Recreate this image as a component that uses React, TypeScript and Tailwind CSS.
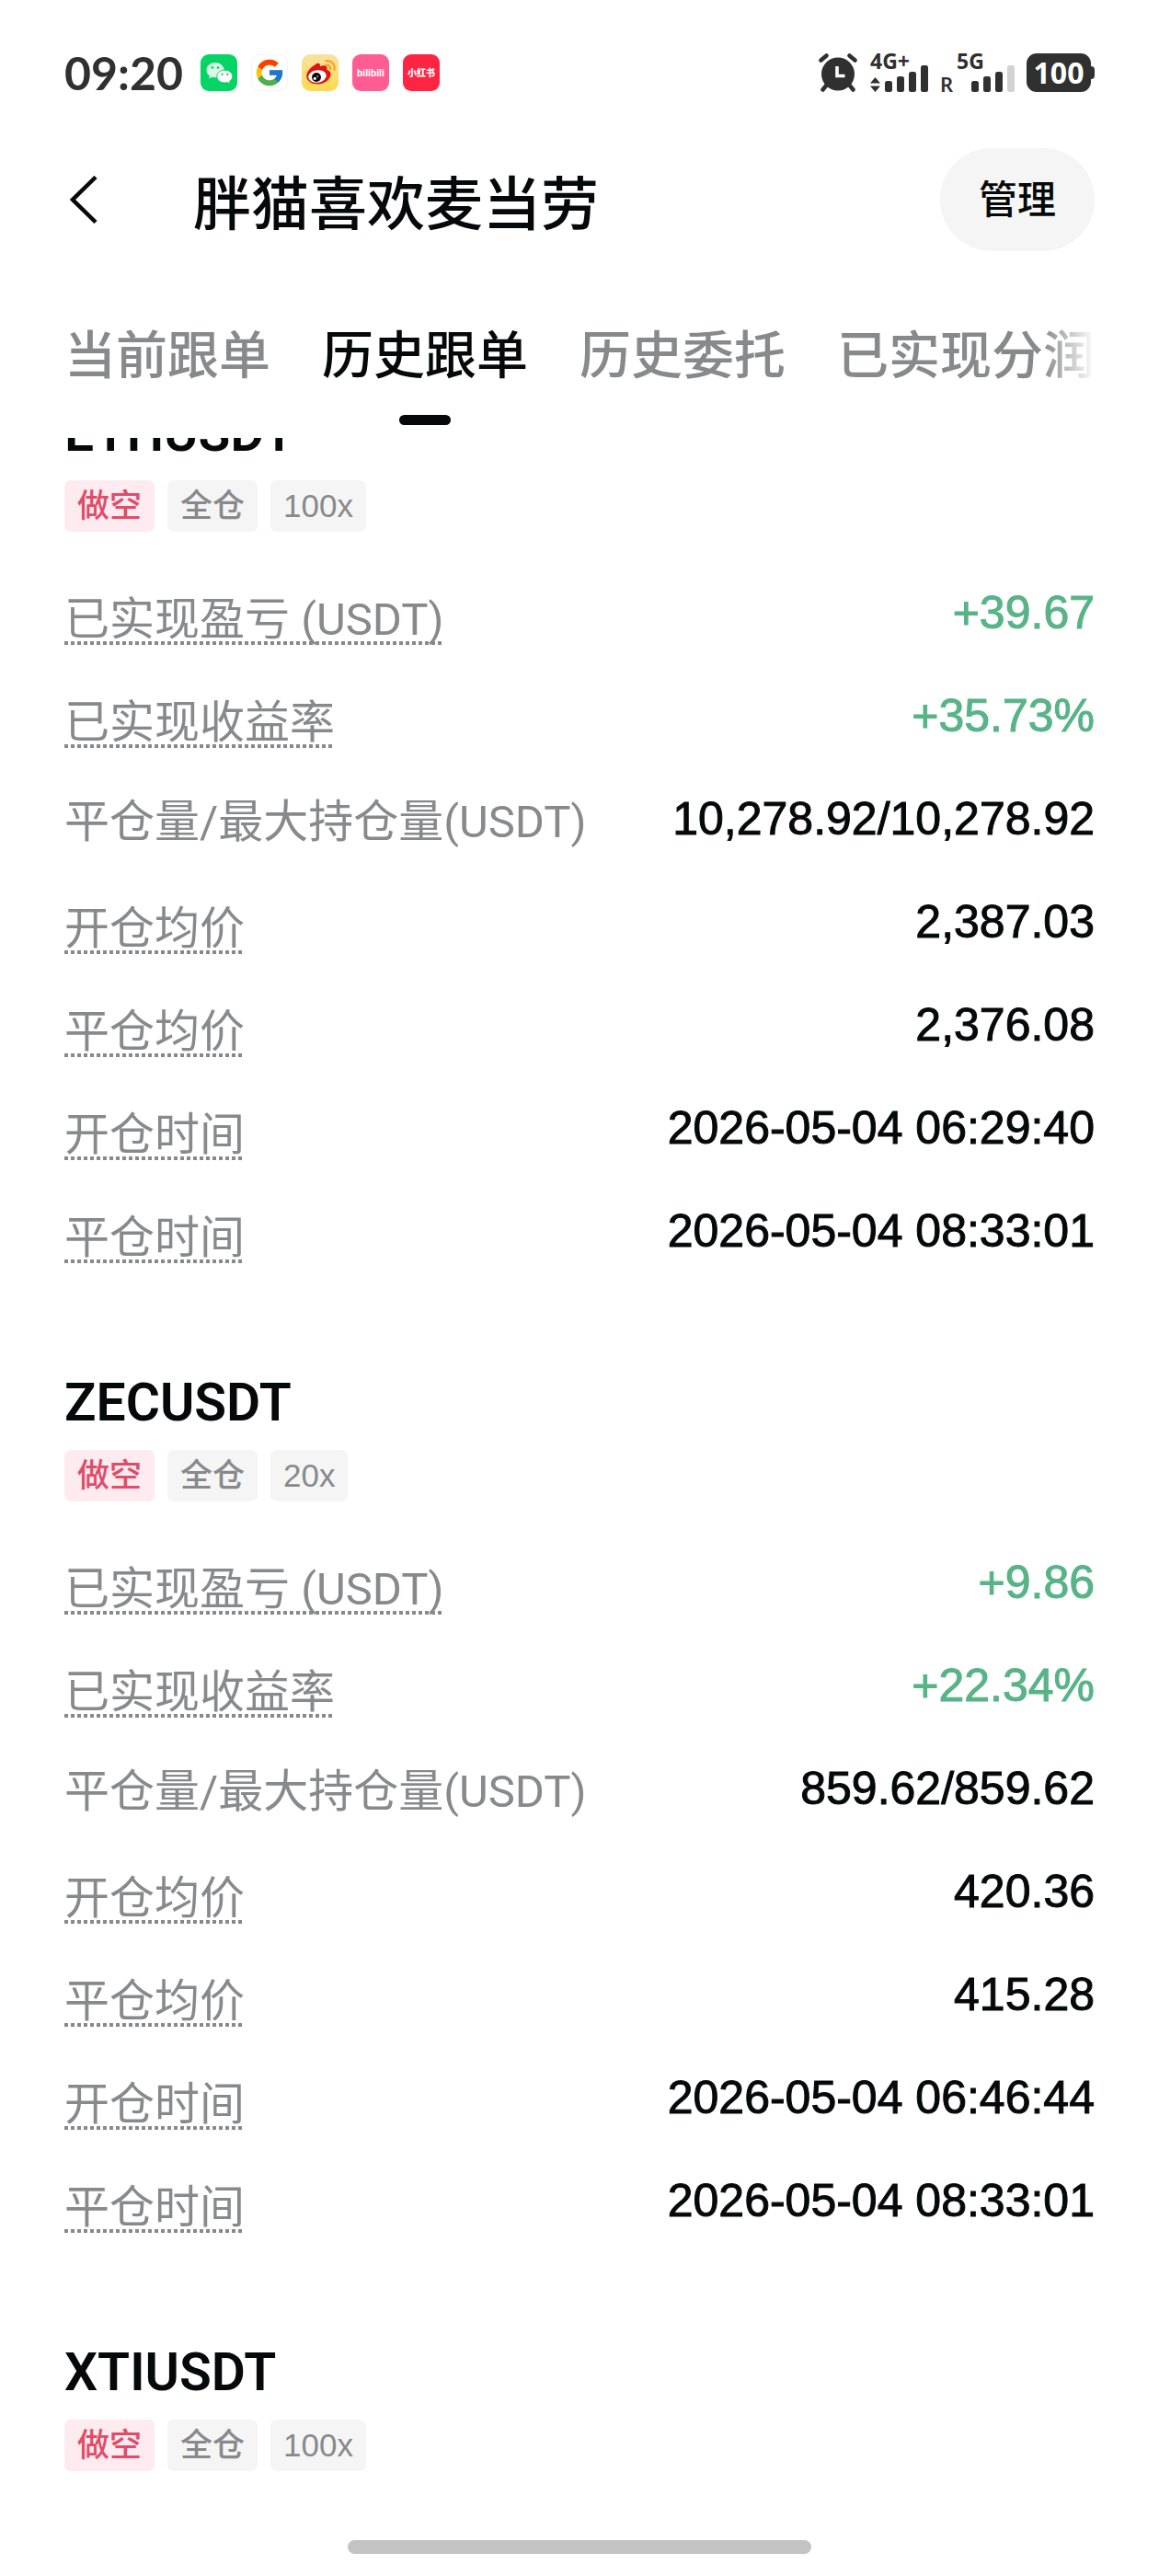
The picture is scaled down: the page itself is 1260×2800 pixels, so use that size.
import React from 'react';
import { FcGoogle } from 'react-icons/fc';

type Row = { label: string; value: string; hint?: boolean; gain?: boolean };
type Position = { symbol: string; leverage: string; rows: Row[] };

const buildRows = (
  pnl: string,
  rate: string,
  size: string,
  open: string,
  close: string,
  openedAt: string,
  closedAt: string
): Row[] => [
  { label: '已实现盈亏 (USDT)', value: pnl, hint: true, gain: true },
  { label: '已实现收益率', value: rate, hint: true, gain: true },
  { label: '平仓量/最大持仓量(USDT)', value: size },
  { label: '开仓均价', value: open, hint: true },
  { label: '平仓均价', value: close, hint: true },
  { label: '开仓时间', value: openedAt, hint: true },
  { label: '平仓时间', value: closedAt, hint: true },
];

const positions: Position[] = [
  {
    symbol: 'ETHUSDT',
    leverage: '100x',
    rows: buildRows('+39.67', '+35.73%', '10,278.92/10,278.92', '2,387.03', '2,376.08', '2026-05-04 06:29:40', '2026-05-04 08:33:01'),
  },
  {
    symbol: 'ZECUSDT',
    leverage: '20x',
    rows: buildRows('+9.86', '+22.34%', '859.62/859.62', '420.36', '415.28', '2026-05-04 06:46:44', '2026-05-04 08:33:01'),
  },
  { symbol: 'XTIUSDT', leverage: '100x', rows: [] },
];

const tabs = ['当前跟单', '历史跟单', '历史委托', '已实现分润'];

const WeChatIcon = () => (
  <svg viewBox="0 0 40 40" className="size-10">
    <rect width="40" height="40" rx="9" fill="#06d566" />
    <path d="M16 9C10.500 9 6.500 12.700 6.500 17.200c0 2.600 1.400 4.900 3.500 6.400l-.9 3 3.500-1.800c1.100.3 2.200.5 3.400.5 5.500 0 9.500-3.600 9.500-8.100S21.500 9 16 9z" fill="#d9fbe6" />
    <path d="M26.500 17.200c-5 0-8.700 3-8.700 6.900s3.700 6.900 8.700 6.900c1 0 2-.1 2.900-.4l3 1.600-.8-2.700c2-1.300 3.200-3.200 3.200-5.400 0-3.900-3.500-6.900-8.300-6.900z" fill="#fff" stroke="#06d566" strokeWidth="1" />
    <g fill="#06c05c">
      <circle cx="13" cy="14.500" r="1.300" />
      <circle cx="19" cy="14.500" r="1.300" />
      <circle cx="23.600" cy="21.800" r="1.100" />
      <circle cx="29.200" cy="21.800" r="1.100" />
    </g>
  </svg>
);

const WeiboIcon = () => (
  <svg viewBox="0 0 40 40" className="size-10">
    <defs>
      <linearGradient id="weibo" x1="0" y1="0" x2="0" y2="1">
        <stop offset="0" stopColor="#f8e3a0" />
        <stop offset="1" stopColor="#ffd94f" />
      </linearGradient>
    </defs>
    <rect width="40" height="40" rx="9" fill="url(#weibo)" />
    <path d="M14.500 11.500c2-2 4.600-2.200 5.300-.6.300.7.200 1.500 0 2.300 2.600-1.200 6.200-1.700 7.400.2.600 1 .5 2.300.1 3.400 2.400.7 4.300 2.200 4.300 4.800 0 5-6 11-14.200 11-6.600 0-12.200-3.400-12.200-9 0-4.300 4.500-9.600 9.300-12.100z" fill="#e01414" />
    <ellipse cx="17" cy="24" rx="9.800" ry="6.700" fill="#fff" transform="rotate(-8 17 24)" />
    <circle cx="16" cy="25" r="5" fill="#0b0b0b" />
    <circle cx="14.300" cy="26.300" r="1.600" fill="#fff" />
    <circle cx="17.300" cy="24" r=".8" fill="#fff" />
    <path d="M26.500 7.300c5-1 10 3 9 9.500M26.500 11.700c2.700-.4 5 1.500 4.600 4.600" fill="none" stroke="#f5a335" strokeWidth="2.400" strokeLinecap="round" />
  </svg>
);

const AlarmIcon = () => (
  <svg viewBox="0 0 42 42" className="size-[42px]">
    <circle cx="21" cy="22.500" r="18" fill="#303030" />
    <g stroke="#303030" strokeWidth="4.500" strokeLinecap="round">
      <path d="M2.500 7.500L8.500 2.500M39.500 7.500L33.500 2.500" />
      <path d="M9 34L4.500 39.500M33 34L37.500 39.500" />
    </g>
    <path d="M20 14v10.500h8.500" fill="none" stroke="#fff" strokeWidth="3.600" />
  </svg>
);

const bars = [
  { x: 0, h: 12 },
  { x: 13, h: 17 },
  { x: 26, h: 22 },
  { x: 39, h: 29 },
];

const Signal: React.FC<{ label: string; weak?: boolean; arrows?: boolean }> = ({ label, weak, arrows }) => (
  <svg viewBox="0 0 64 42" className="h-[42px] w-16 overflow-visible">
    <text x="0" y="17" fontSize="23" fontWeight="700" fill="#303030" className="font-['Noto_Sans',sans-serif]">
      {label}
    </text>
    {arrows && <path d="M5.500 26l5.500 6.500H0zM5.500 42L0 35.500h11z" fill="#303030" />}
    {bars.map((bar, i) => (
      <rect key={bar.x} x={bar.x + 16} y={42 - bar.h} width="8" height={bar.h} rx="2.500" fill={weak && i === 3 ? '#d2d2d2' : '#303030'} />
    ))}
  </svg>
);

const StatusBar = () => (
  <div className="flex h-[100px] items-end justify-between px-[70px]">
    <div className="flex items-center gap-[15px]">
      <span className="w-[133px] font-[Lato,sans-serif] text-[50px] leading-[42px] font-bold text-[#303030]">09:20</span>
      <WeChatIcon />
      <span className="grid size-10 place-items-center rounded-[9px] border border-gray-100 bg-white">
        <FcGoogle size={34} />
      </span>
      <WeiboIcon />
      <span className="grid size-10 place-items-center rounded-[9px] bg-[#ff5c93] font-[Roboto,sans-serif] text-[11px] leading-none font-bold text-white">bilibili</span>
      <span className="grid size-10 place-items-center rounded-[9px] bg-[#ff2442] font-['Noto_Sans_CJK_SC',sans-serif] text-[10px] leading-none font-black text-white">小红书</span>
    </div>
    <div className="flex items-end text-[#303030]">
      <AlarmIcon />
      <div className="ml-3.5 flex items-end">
        <Signal label="4G+" arrows />
        <span className="mr-1 ml-3 w-[14px] font-['Noto_Sans',sans-serif] text-[22px] leading-[18px] font-semibold">R</span>
      </div>
      <Signal label="5G" weak />
      <div className="ml-3 flex items-center">
        <span className="grid h-[42px] w-[70px] place-items-center rounded-[11px] bg-[#303030] font-['Noto_Sans',sans-serif] text-[32px] leading-none font-bold text-white">100</span>
        <span className="h-3.5 w-1 rounded-r-sm bg-[#303030]" />
      </div>
    </div>
  </div>
);

const Header = () => (
  <header className="flex items-center px-[70px] pt-[61px]">
    <button aria-label="返回" className="flex h-28 w-[140px] items-center pl-1.5">
      <svg viewBox="0 0 30 52" className="h-[52px] w-[30px]" fill="none" stroke="#060909" strokeWidth="4.500">
        <path d="M28 1.500L3 26l25 24.500" />
      </svg>
    </button>
    <h1 className="flex-1 pt-3 text-[63px] leading-[84px] font-medium">胖猫喜欢麦当劳</h1>
    <button className="h-28 rounded-full bg-[#f5f5f5] px-[42px] text-[42px] font-medium">管理</button>
  </header>
);

const Tabs = () => (
  <nav className="mx-[70px] flex gap-14 overflow-hidden pt-[72px] pb-3.5 [mask-image:linear-gradient(to_right,black_calc(100%-56px),transparent)]">
    {tabs.map((tab) => {
      const active = tab === '历史跟单';
      return (
        <button
          key={tab}
          className={`flex shrink-0 flex-col items-center gap-[22px] text-[56px] leading-[84px] font-medium ${active ? 'text-[#060909]' : 'text-[#88898b]'}`}
        >
          {tab}
          {active && <span className="h-[11px] w-14 rounded-full bg-[#060909]" />}
        </button>
      );
    })}
  </nav>
);

const tagClass = "rounded-[7px] px-3.5 text-[35px] leading-[56px] font-medium font-['Liberation_Sans','Noto_Sans_CJK_SC',sans-serif]";

const PositionCard: React.FC<{ item: Position }> = ({ item }) => (
  <article className="pb-[114px]">
    <h2 className="font-[Roboto,sans-serif] text-[57px] leading-[70px] font-semibold">{item.symbol}</h2>
    <div className="mt-4 flex gap-3.5">
      <span className={`${tagClass} bg-[#fdebef] text-[#e04c69]`}>做空</span>
      <span className={`${tagClass} bg-[#f5f5f5] text-[#88898b]`}>全仓</span>
      <span className={`${tagClass} bg-[#f5f5f5] text-[#88898b]`}>{item.leverage}</span>
    </div>
    {item.rows.length > 0 && (
      <dl className="mt-14 flex flex-col gap-[42px]">
        {item.rows.map((row) => (
          <div key={row.label} className="flex h-[70px] items-start justify-between text-[49px] leading-[64px]">
            <dt className="text-[#88898b]">
              {row.hint ? (
                <span className="block h-[67px] bg-[repeating-linear-gradient(to_right,currentColor_0_4px,transparent_4px_7px)] bg-[length:100%_4px] bg-bottom bg-no-repeat pt-2">{row.label}</span>
              ) : (
                <span className="block pt-1">{row.label}</span>
              )}
            </dt>
            <dd className={`font-['Liberation_Sans',sans-serif] text-[50px] [-webkit-text-stroke:1px] ${row.gain ? 'text-[#58b386]' : 'text-[#060909]'}`}>{row.value}</dd>
          </div>
        ))}
      </dl>
    )}
  </article>
);

export default function App() {
  return (
    <div className="flex min-h-screen flex-col bg-white font-[Roboto,'Noto_Sans_CJK_SC',sans-serif] text-[#060909]">
      <StatusBar />
      <Header />
      <Tabs />
      <main className="flex-1 overflow-hidden px-[70px]">
        <div className="-mt-10">
          {positions.map((item) => (
            <PositionCard key={item.symbol} item={item} />
          ))}
        </div>
      </main>
      <div className="fixed inset-x-0 bottom-6 mx-auto h-[15px] w-2/5 rounded-full bg-[#c3c3c3]" />
    </div>
  );
}
